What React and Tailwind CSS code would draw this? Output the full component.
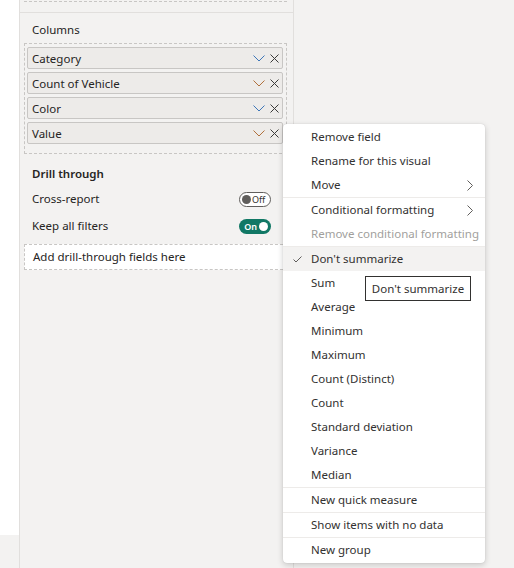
import React from "react";

const fields = [
  { name: "Category", tone: "blue" },
  { name: "Count of Vehicle", tone: "brown" },
  { name: "Color", tone: "blue" },
  { name: "Value", tone: "brown" },
];

// menu groups, a separator line is drawn between each group
const menuGroups = [
  [{ label: "Remove field" }, { label: "Rename for this visual" }, { label: "Move", sub: true }],
  [{ label: "Conditional formatting", sub: true }, { label: "Remove conditional formatting", disabled: true }],
  [
    { label: "Don't summarize", checked: true },
    { label: "Sum" },
    { label: "Average" },
    { label: "Minimum" },
    { label: "Maximum" },
    { label: "Count (Distinct)" },
    { label: "Count" },
    { label: "Standard deviation" },
    { label: "Variance" },
    { label: "Median" },
  ],
  [{ label: "New quick measure" }],
  [{ label: "Show items with no data" }],
  [{ label: "New group" }],
];

const Chevron = ({ color }) => (
  <svg width="12" height="7" viewBox="0 0 12 7" fill="none">
    <path d="M0.5 0.5 L6 6 L11.5 0.5" stroke={color} strokeWidth="1" />
  </svg>
);

const Close = () => (
  <svg width="9" height="9" viewBox="0 0 9 9" fill="none">
    <path d="M0.5 0.5 L8.5 8.5 M8.5 0.5 L0.5 8.5" stroke="#3b3a39" strokeWidth="1" />
  </svg>
);

const FieldPill = ({ name, tone }) => (
  <div className="flex h-[22px] items-center rounded-[2px] border border-[#c8c6c4] bg-[#edebe9] pl-[4px] pr-[3px]">
    <span className="flex-1 pt-[1px] text-[11.5px] text-[#252423]">{name}</span>
    <span className="mr-[5px] flex items-center">
      <Chevron color={tone === "blue" ? "#3f77b8" : "#b0703c"} />
    </span>
    <Close />
  </div>
);

const MenuItem = ({ label, sub, disabled, checked }) => (
  <div
    className={`relative flex h-[24px] items-center pl-[28px] pr-[12px] text-[11.5px] ${
      checked ? "bg-[#f3f2f1]" : ""
    } ${disabled ? "text-[#a19f9d]" : "text-[#323130]"}`}
  >
    {checked && (
      <svg className="absolute left-[10px] top-[9px]" width="9" height="7" viewBox="0 0 9 7" fill="none">
        <path d="M0.5 3.5 L3 6 L8.5 0.5" stroke="#605e5c" strokeWidth="1" />
      </svg>
    )}
    <span className="flex-1 whitespace-nowrap">{label}</span>
    {sub && (
      <svg width="6" height="11" viewBox="0 0 6 11" fill="none">
        <path d="M0.5 0.5 L5.5 5.5 L0.5 10.5" stroke="#605e5c" strokeWidth="1" />
      </svg>
    )}
  </div>
);

const App = () => {
  return (
    <div
      className="relative flex h-[568px] w-[514px] overflow-hidden bg-[#f3f2f1]"
      style={{ fontFamily: '"Segoe UI", "Noto Sans", "Open Sans", sans-serif' }}
    >
      {/* left strip */}
      <div className="flex w-[20px] flex-col border-r border-[#e1dfdd]">
        <div className="flex-1 bg-white" />
        <div className="h-[33px] bg-[#f3f2f1]" />
      </div>

      {/* field wells pane */}
      <div className="flex w-[274px] flex-col border-r border-[#e1dfdd]">
        <div className="ml-[4px] mr-[6px] h-[2px] border-b border-dashed border-[#c8c6c4]" />
        <div className="mt-[10px] border-t border-[#e1dfdd]" />

        <div className="ml-[12px] mt-[9px] text-[11.5px] leading-[16px] text-[#252423]">Columns</div>

        <div className="ml-[4px] mr-[6px] mt-[5px] flex flex-col gap-[3px] border border-dashed border-[#c8c6c4] pb-[9px] pl-[2px] pr-[3px] pt-[3px]">
          {fields.map((f) => (
            <FieldPill key={f.name} name={f.name} tone={f.tone} />
          ))}
        </div>

        <div className="ml-[12px] mt-[12px] text-[11.5px] font-semibold leading-[16px] text-[#252423]">
          Drill through
        </div>

        <div className="ml-[12px] mr-[22px] mt-[9px] flex h-[16px] items-center justify-between">
          <span className="text-[11.5px] text-[#252423]">Cross-report</span>
          <div className="flex h-[15px] w-[32px] items-center rounded-full border border-[#605e5c] bg-white pl-[2px]">
            <span className="h-[9px] w-[9px] rounded-full bg-[#605e5c]" />
            <span className="ml-[1px] text-[9px] leading-none text-[#323130]">Off</span>
          </div>
        </div>

        <div className="ml-[12px] mr-[22px] mt-[11px] flex h-[16px] items-center justify-between">
          <span className="text-[11.5px] text-[#252423]">Keep all filters</span>
          <div className="flex h-[15px] w-[32px] items-center justify-end rounded-full bg-[#117865] pr-[3px]">
            <span className="mr-[2px] text-[9px] font-semibold leading-none text-white">On</span>
            <span className="h-[9px] w-[9px] rounded-full bg-white" />
          </div>
        </div>

        <div className="ml-[4px] mt-[10px] flex h-[26px] items-center border border-dashed border-[#c8c6c4] bg-white pl-[8px]">
          <span className="text-[11.5px] text-[#252423]">Add drill-through fields here</span>
        </div>
      </div>

      <div className="flex-1" />

      {/* context menu */}
      <div className="absolute left-[283px] top-[124px] w-[202px] rounded-[4px] bg-white py-[1px] shadow-[0_2px_6px_rgba(0,0,0,0.18),0_0_1px_rgba(0,0,0,0.2)]">
        {menuGroups.map((group, gi) => (
          <div key={gi} className={gi > 0 ? "border-t border-[#edebe9]" : ""}>
            {group.map((item) => (
              <MenuItem key={item.label} {...item} />
            ))}
          </div>
        ))}
      </div>

      {/* tooltip */}
      <div className="absolute left-[365px] top-[276px] flex h-[25px] w-[106px] items-center justify-center border border-[#323130] bg-white text-[11.5px] text-[#323130]">
        Don't summarize
      </div>
    </div>
  );
};

export default App;
